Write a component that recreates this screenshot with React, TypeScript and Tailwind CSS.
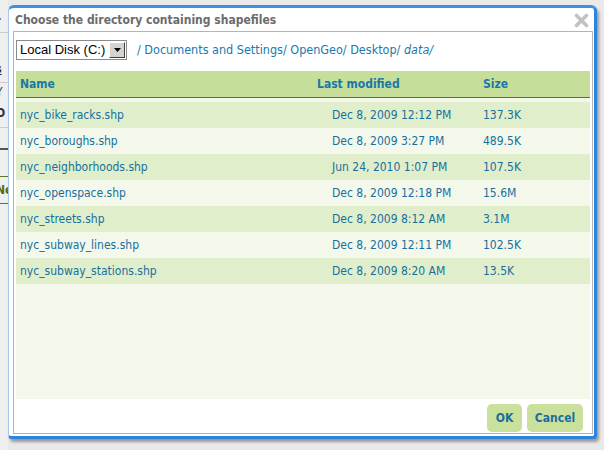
import React from "react";

const rows = [
  ["nyc_bike_racks.shp", "Dec 8, 2009 12:12 PM", "137.3K"],
  ["nyc_boroughs.shp", "Dec 8, 2009 3:27 PM", "489.5K"],
  ["nyc_neighborhoods.shp", "Jun 24, 2010 1:07 PM", "107.5K"],
  ["nyc_openspace.shp", "Dec 8, 2009 12:18 PM", "15.6M"],
  ["nyc_streets.shp", "Dec 8, 2009 8:12 AM", "3.1M"],
  ["nyc_subway_lines.shp", "Dec 8, 2009 12:11 PM", "102.5K"],
  ["nyc_subway_stations.shp", "Dec 8, 2009 8:20 AM", "13.5K"],
];

export default function App() {
  return (
    <div className="w-[604px] h-[450px] bg-[#e9e9e9] flex overflow-hidden font-['DejaVu_Sans_Condensed','DejaVu_Sans','Liberation_Sans',sans-serif]">
      {/* background page strip */}
      <div className="w-[8px] shrink-0 overflow-hidden bg-[#efefef] flex flex-col text-[12px] text-[#333]">
        <div className="h-[12px]" />
        <div className="w-[30px] -ml-[12px] font-bold h-[20px]">ar</div>
        <div className="w-[30px] -ml-[12px] h-[20px] border-t border-[#ccc]">ig</div>
        <div className="w-[30px] -ml-[12px] h-[8px]" />
        <div className="w-[30px] -ml-[12px] font-bold underline h-[22px]">es</div>
        <div className="w-[30px] -ml-[12px] h-[22px] border-t border-[#ccc]">NY</div>
        <div className="w-[30px] -ml-[4px] font-bold h-[24px] border-b border-[#ccc]">O</div>
        <div className="w-[30px] -ml-[14px] font-bold h-[22px] border-b-2 border-[#555]">re</div>
        <div className="w-[30px] -ml-[14px] h-[26px]">:\</div>
        <div className="w-[30px] -ml-[4px] font-bold text-[#4a6a10] h-[28px] border-t border-b border-[#5a7a20] flex items-center">Ne</div>
      </div>

      {/* dialog */}
      <div className="mt-[5px] w-[589px] h-[434px] shrink-0 bg-white rounded-t-[6px] rounded-b-[4px] border-t-[3px] border-t-[#3a8fe6] border-l border-l-[#a6c7ee] border-r-[3px] border-r-[#2b84de] border-b-[3px] border-b-[#2b84de] shadow-[2px_3px_3px_rgba(0,0,0,0.35)] flex flex-col">
        <div className="h-[23px] shrink-0 flex items-center justify-between pl-[6px] pr-[5px]">
          <span className="text-[12px] font-bold text-[#6b6b6b]">Choose the directory containing shapefiles</span>
          <svg width="15" height="15" viewBox="0 0 15 15" className="mt-[2px]">
            <path d="M2.5 2.5 L12.5 12.5 M12.5 2.5 L2.5 12.5" stroke="#c2c2c2" strokeWidth="3.6" strokeLinecap="round" />
          </svg>
        </div>
        <div className="ml-[4px] mr-[1px] mb-[2px] flex-1 border border-[#b4b4b4] flex flex-col px-[2px]">
          <div className="h-[39px] shrink-0 flex items-start pt-[8px]">
            <div className="w-[111px] h-[20px] border border-[#8a8a8a] flex items-stretch bg-white">
              <span className="flex-1 text-[13px] text-black leading-[18px] pl-[3px] font-['Liberation_Sans',sans-serif]">Local Disk (C:)</span>
              <div className="w-[16px] m-[1px] bg-[#d6d3ce] border border-t-white border-l-white border-r-[#404040] border-b-[#404040] flex items-center justify-center">
                <svg width="7" height="4" viewBox="0 0 7 4"><path d="M0 0 H7 L3.5 4 Z" fill="#000" /></svg>
              </div>
            </div>
            <div className="ml-[10px] text-[12.5px] text-[#1a78ac] leading-[20px]">
              / Documents and Settings/ OpenGeo/ Desktop/ <i>data/</i>
            </div>
          </div>
          <div className="flex-1 bg-[#f4f8eb] flex flex-col">
            <div className="h-[27px] shrink-0 bg-[#c5df9b] border-b border-[#25798c] flex items-center text-[12px] font-bold text-[#1b78a5]">
              <div className="w-[301px] pl-[4px]">Name</div>
              <div className="w-[166px]">Last modified</div>
              <div>Size</div>
            </div>
            <div className="h-[4px]" />
            {rows.map((r, i) => (
              <div
                key={r[0]}
                className={`h-[26px] flex items-center text-[12px] text-[#16709e] ${i % 2 === 0 ? "bg-[#e1eecb]" : "bg-[#f4f8eb]"}`}
              >
                <div className="w-[316px] pl-[4px]">{r[0]}</div>
                <div className="w-[151px]">{r[1]}</div>
                <div>{r[2]}</div>
              </div>
            ))}
          </div>
          <div className="h-[34px] shrink-0 flex items-start justify-end pt-[5px] pr-[7px] gap-[5px]">
            <button className="h-[28px] w-[35px] rounded-[5px] bg-[#c9e19c] text-[12px] font-bold text-[#1a6e9c]">OK</button>
            <button className="h-[28px] w-[56px] rounded-[5px] bg-[#c9e19c] text-[12px] font-bold text-[#1a6e9c]">Cancel</button>
          </div>
        </div>
      </div>
    </div>
  );
}
